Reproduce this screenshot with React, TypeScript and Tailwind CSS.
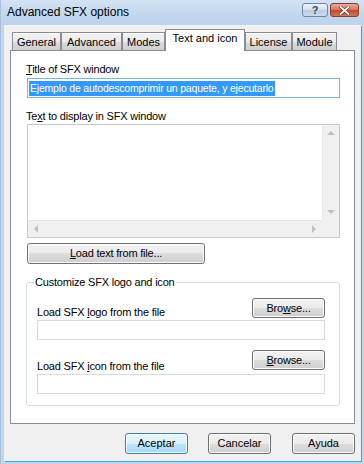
import React from "react";

const btnBase =
  "flex items-center justify-center rounded-[3px] border shadow-[inset_0_0_0_1px_#fcfcfc]";
const grayBtn =
  "border-[#707070] bg-[linear-gradient(to_bottom,#f2f2f2_0%,#ebebeb_50%,#dddddd_50%,#cfcfcf_100%)]";
const blueBtn =
  "border-[#3c7fb1] bg-[linear-gradient(to_bottom,#eaf6fd_0%,#d9f0fc_50%,#bee6fd_50%,#a7d9f5_100%)]";

const tabIdle =
  "h-[18px] border border-b-0 border-[#898c95] bg-[linear-gradient(to_bottom,#f2f2f2_0%,#ebebeb_50%,#dddddd_50%,#cfcfcf_100%)] flex justify-center pt-[3px] shadow-[inset_0_1px_0_#ffffff]";

const Arrow = ({ dir }: { dir: "up" | "down" | "left" | "right" }) => {
  const pts = {
    up: "0,4 4,0 8,4",
    down: "0,0 4,4 8,0",
    left: "4,0 0,4 4,8",
    right: "0,0 4,4 0,8",
  }[dir];
  const vert = dir === "up" || dir === "down";
  return (
    <svg width={vert ? 8 : 4} height={vert ? 4 : 8} viewBox={vert ? "0 0 8 4" : "0 0 4 8"}>
      <polygon points={pts} fill="#bfbfbf" />
    </svg>
  );
};

const Browse = ({ underline }: { underline: "B" | "w" }) => (
  <button className={`${btnBase} ${grayBtn} w-[73px] h-[20px]`} type="button">
    {underline === "B" ? (
      <span>
        <u>B</u>rowse...
      </span>
    ) : (
      <span>
        Bro<u>w</u>se...
      </span>
    )}
  </button>
);

const App = () => {
  return (
    <div className="w-[364px] h-[464px] flex flex-col bg-[#c2d7ee] border-l border-[#a9bfd8] font-['Liberation_Sans',Arial,sans-serif] text-[11px] leading-[13px] text-black select-none">
      {/* title bar */}
      <div className="h-[25px] flex items-start bg-[linear-gradient(to_bottom,#d3e3f4_0%,#c2d7ee_60%,#bdd3ec_100%)]">
        <div className="pl-[6px] pt-[5px] text-[12px] leading-[15px] text-black flex-1">
          Advanced SFX options
        </div>
        <div className="flex pt-[3px] pr-[5px]">
          <div className="w-[26px] h-[14px] rounded-[3px] border border-[#6f86a4] bg-[linear-gradient(to_bottom,#eef3fa_0%,#d6e2f0_45%,#b9cde3_55%,#cbdcee_100%)] flex items-center justify-center text-[11px] leading-[11px] font-bold text-[#34475e]">
            ?
          </div>
          <div className="ml-[2px] w-[29px] h-[14px] rounded-[3px] border border-[#8a3b2c] bg-[linear-gradient(to_bottom,#e8ab9d_0%,#d77a64_45%,#c24a30_55%,#d2745c_100%)] flex items-center justify-center">
            <svg width="11" height="9" viewBox="0 0 11 9">
              <path d="M1.5 1 L9.5 8 M9.5 1 L1.5 8" stroke="#7a2a1c" strokeWidth="3.2" strokeLinecap="square" />
              <path d="M1.5 1 L9.5 8 M9.5 1 L1.5 8" stroke="#ffffff" strokeWidth="1.8" strokeLinecap="square" />
            </svg>
          </div>
        </div>
      </div>

      {/* client area */}
      <div className="flex-1 mx-[3px] mb-[3px] bg-[#f0f0f0] pl-[6px] flex flex-col shadow-[1px_1px_0_#3aa7de]">
        {/* tabs */}
        <div className="h-[25px] flex items-end pl-[2px]">
          <div className={`${tabIdle} w-[49px]`}>General</div>
          <div className={`${tabIdle} w-[61px]`}>Advanced</div>
          <div className={`${tabIdle} w-[43px]`}>Modes</div>
          <div className="relative z-10 -mb-px h-[22px] w-[80px] border border-b-0 border-[#898c95] bg-white flex justify-center pt-[2px]">
            Text and icon
          </div>
          <div className={`${tabIdle} w-[47px]`}>License</div>
          <div className={`${tabIdle} w-[45px]`}>Module</div>
        </div>

        {/* panel */}
        <div className="w-[345px] h-[374px] border border-[#898c95] bg-white flex flex-col tracking-[-0.2px]">
          <div className="mt-[12px] ml-[15px]">
            <u>T</u>itle of SFX window
          </div>
          <div className="mt-[2px] ml-[16px] w-[313px] h-[20px] border border-[#7eb4ea] flex items-center pl-[1px]">
            <span className="bg-[#3399ff] text-white text-[10.5px] leading-[15px] tracking-[-0.2px] px-[1px]">
              Ejemplo de autodescomprimir un paquete, y ejecutarlo
            </span>
          </div>

          <div className="mt-[12px] ml-[15px]">
            Te<u>x</u>t to display in SFX window
          </div>
          <div className="mt-[1px] ml-[16px] w-[313px] h-[114px] border border-[#c9c9c9] flex flex-col">
            <div className="flex flex-1">
              <div className="flex-1" />
              <div className="w-[17px] bg-[#f0f0f0] border-l border-[#e8e8e8] flex flex-col items-center justify-between py-[6px]">
                <Arrow dir="up" />
                <Arrow dir="down" />
              </div>
            </div>
            <div className="flex h-[17px]">
              <div className="flex-1 bg-[#f0f0f0] border-t border-[#e8e8e8] flex items-center justify-between px-[6px]">
                <Arrow dir="left" />
                <Arrow dir="right" />
              </div>
              <div className="w-[17px] bg-[#f0f0f0]" />
            </div>
          </div>

          <button className={`${btnBase} ${grayBtn} mt-[5px] ml-[16px] w-[178px] h-[21px]`} type="button">
            <span>
              <u>L</u>oad text from file...
            </span>
          </button>

          {/* group box */}
          <div className="relative mt-[18px] ml-[15px] w-[314px] border border-[#d5dfe5] rounded-[3px] pt-[15px] pl-[10px] pr-[14px] pb-[11px]">
            <div className="absolute top-[-7px] left-[7px] bg-white px-[1px]">
              Customize SFX logo and icon
            </div>
            <div className="h-[21px] flex justify-between">
              <div className="self-end">
                Load SFX <u>l</u>ogo from the file
              </div>
              <Browse underline="w" />
            </div>
            <div className="mt-[1px] h-[20px] border border-[#d9dadc] bg-white" />

            <div className="mt-[10px] h-[23px] flex justify-between">
              <div className="self-end">
                Load SFX <u>i</u>con from the file
              </div>
              <Browse underline="B" />
            </div>
            <div className="mt-[1px] h-[20px] border border-[#d9dadc] bg-white" />
          </div>
        </div>

        {/* dialog buttons */}
        <div className="mt-[9px] flex pl-[115px]">
          <button className={`${btnBase} ${blueBtn} w-[63px] h-[21px]`} type="button">
            Aceptar
          </button>
          <button className={`${btnBase} ${grayBtn} ml-[20px] w-[63px] h-[21px]`} type="button">
            Cancelar
          </button>
          <button className={`${btnBase} ${grayBtn} ml-[21px] w-[63px] h-[21px]`} type="button">
            Ayuda
          </button>
        </div>
      </div>
    </div>
  );
};

export default App;
